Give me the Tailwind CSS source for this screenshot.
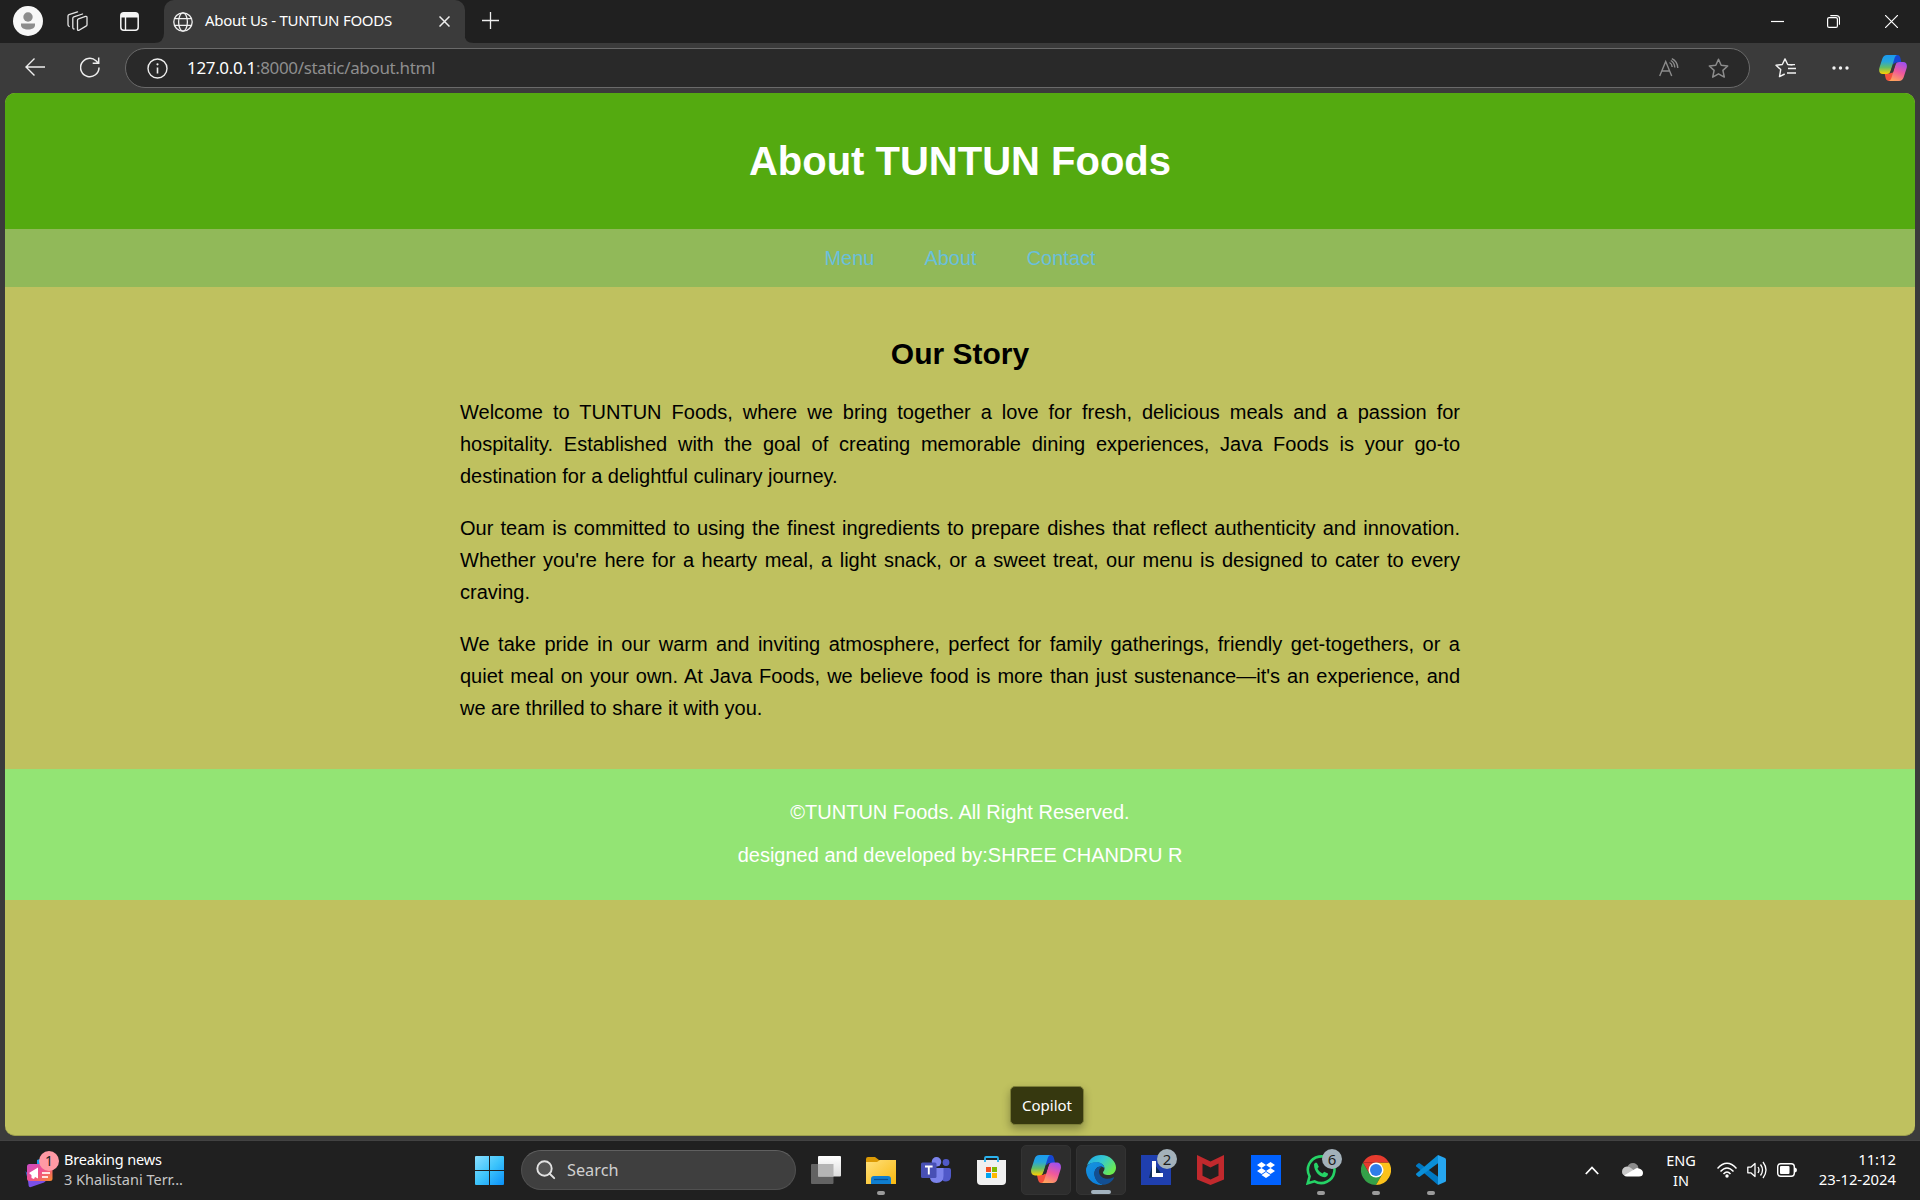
<!DOCTYPE html>
<html lang="en">
<head>
<meta charset="utf-8">
<title>About Us - TUNTUN FOODS</title>
<script src="https://cdn.jsdelivr.net/npm/@tailwindcss/browser@4"></script>
</head>
<body class="w-[1920px] h-[1200px] overflow-hidden bg-[#3b3b3b] flex flex-col font-['Noto_Sans','Open_Sans',sans-serif] text-white">

<!-- Tab strip -->
<header class="h-[43px] shrink-0 bg-[#202020] flex items-start">
  <div class="flex w-[154px] h-[43px] items-center pl-[13px] pb-px gap-[24px]">
    <svg width="30" height="30" viewBox="0 0 30 30"><circle cx="15" cy="15" r="15" fill="#f7f7f7"/><circle cx="15" cy="11" r="4.7" fill="#8c8c8c"/><path d="M8 17.5h14v1.5c0 3-3 4.5-7 4.5s-7-1.500-7-4.500z" fill="#8c8c8c"/></svg>
    <svg width="21" height="21" viewBox="0 0 21 21" fill="none" stroke="#e4e4e4" stroke-width="1.300" stroke-linejoin="round" stroke-linecap="round"><path d="M10.500 9.200q0-1 1-1.400l7-2.400q1.500-.4 1.500 1v7.300q0 1-1 1.400l-7 4.200q-1.500.6-1.500-1z"/><path d="M7 18q-1.200-.2-1.200-1.600V7.300q0-1 1-1.400L15.500 3"/><path d="M2.200 15.500Q1 15 1 13.600V5q0-1 1-1.400L10.500.8"/></svg>
    <svg class="ml-[8px]" width="19" height="19" viewBox="0 0 19 19"><rect x=".8" y=".8" width="17.400" height="17.400" rx="3" fill="none" stroke="#f4f4f4" stroke-width="1.500"/><path d="M1 5.500V3a2 2 0 012-2h13a2 2 0 012 2v2.500z" fill="#f4f4f4"/><path d="M5.500 5v13" stroke="#f4f4f4" stroke-width="1.400"/></svg>
  </div>
  <svg class="shrink-0" width="10" height="43" viewBox="0 0 10 43"><path d="M10 33v10H0q10 0 10-10z" fill="#3b3b3b"/></svg>
  <div class="-mr-px w-[301px] h-[43px] rounded-t-[10px] bg-[#3b3b3b] flex items-center pl-[9px]">
    <svg width="20" height="20" viewBox="0 0 20 20" fill="none" stroke="#f0f0f0" stroke-width="1.300"><circle cx="10" cy="10" r="9.200"/><ellipse cx="10" cy="10" rx="4.400" ry="9.200"/><path d="M1.600 6.700h16.800M1.600 13.300h16.800"/></svg>
    <span class="ml-[12px] pb-[3px] text-[15px] leading-5 w-[234px] whitespace-nowrap tracking-[-0.26px]">About Us - TUNTUN FOODS</span>
    <svg width="11" height="11" viewBox="0 0 11 11" stroke="#eee" stroke-width="1.500"><path d="M.5.5l10 10M10.500.5l-10 10"/></svg>
  </div>
  <svg class="shrink-0" width="10" height="43" viewBox="0 0 10 43"><path d="M0 33v10h10Q0 43 0 33z" fill="#3b3b3b"/></svg>
  <svg class="ml-[8px] mt-[12px]" width="17" height="17" viewBox="0 0 17 17" stroke="#eee" stroke-width="1.300"><path d="M8.500 0v17M0 8.500h17"/></svg>
  <div class="ml-auto flex h-[43px] items-center pr-[22px] gap-[44px]">
    <svg width="13" height="13" viewBox="0 0 13 13" stroke="#fff" stroke-width="1.200"><path d="M0 6.500h13"/></svg>
    <svg class="-ml-px mr-px" width="13" height="13" viewBox="0 0 13 13" fill="none" stroke="#fff" stroke-width="1.200"><rect x=".6" y="2.600" width="9.800" height="9.800" rx="1.500"/><path d="M3.300.6h6.200q3 0 3 3v6.200"/></svg>
    <svg width="13" height="13" viewBox="0 0 13 13" stroke="#fff" stroke-width="1.200"><path d="M0 0l13 13M13 0L0 13"/></svg>
  </div>
</header>

<!-- Address bar -->
<div class="h-[50px] shrink-0 flex items-center">
  <svg class="ml-[25px] mb-[2px]" width="20" height="18" viewBox="0 0 20 18" fill="none" stroke="#eee" stroke-width="1.400"><path d="M20 9H1M9.500.5L1 9l8.500 8.500"/></svg>
  <svg class="ml-[35px] mb-px" width="20" height="21" viewBox="0 0 20 21" fill="none" stroke="#eee" stroke-width="1.500"><path d="M19 10.500a9.200 9.200 0 11-3-6.800l2.500 2.500M18.700.5v5.800h-6"/></svg>
  <div class="ml-[25px] w-[1625px] h-[40px] rounded-full border border-[#6a6a6a] bg-[#292929] flex items-center pl-[21px] pr-[20px]">
    <svg width="21" height="21" viewBox="0 0 21 21"><circle cx="10.500" cy="10.500" r="9.500" fill="none" stroke="#eee" stroke-width="1.400"/><path d="M10.500 9.500v6" stroke="#eee" stroke-width="1.600"/><circle cx="10.500" cy="6.300" r="1.100" fill="#eee"/></svg>
    <span class="ml-[19px] pb-px text-[17px] leading-6 tracking-[-0.34px] text-[#8e8e8e] whitespace-nowrap"><span class="text-white">127.0.0.1</span>:8000/static/about.html</span>
    <svg class="ml-auto mb-px" width="20" height="19" viewBox="0 0 20 19" fill="none" stroke="#8c8c8c" stroke-width="1.400"><path d="M.7 18L6.700 3.500l6 14.500M2.800 13h8M10.500 4.500q2.500 1.300 2.700 4.500M11.800 2.500q3.700 2 4 7M12.800.7q5.500 2.500 6 9.300"/></svg>
    <svg class="ml-[29px]" width="21" height="21" viewBox="0 0 21 21" fill="none" stroke="#8c8c8c" stroke-width="1.500" stroke-linejoin="round"><path d="M10.500 1.300l2.700 6 6.500.7-4.800 4.400 1.400 6.700-5.800-3.300-5.800 3.300 1.400-6.700L1.300 8l6.500-.7z"/></svg>
  </div>
  <svg class="ml-[25px]" width="21" height="20" viewBox="0 0 21 20" fill="none" stroke="#f2f2f2" stroke-width="1.400" stroke-linejoin="round"><path d="M17.500 7l-4.800-.5L10 .9 7.300 6.500 1 7.300l4.700 4.300-1.200 7L9.700 16M13 10.500h8M12 15h9M15 6.600h5"/></svg>
  <svg class="ml-[36px] mb-px" width="17" height="4" viewBox="0 0 17 4" fill="#f2f2f2"><circle cx="2" cy="2" r="1.700"/><circle cx="8.500" cy="2" r="1.700"/><circle cx="15" cy="2" r="1.700"/></svg>
  <svg class="ml-[30px]" width="28" height="26" viewBox="0 0 30 28">
    <defs>
      <linearGradient id="cpA" x1="0" y1="0" x2="0" y2="1"><stop offset="0" stop-color="#1a9af0"/><stop offset=".35" stop-color="#27a5da"/><stop offset=".65" stop-color="#62bd68"/><stop offset="1" stop-color="#ffd000"/></linearGradient>
      <linearGradient id="cpB" x1=".7" y1="0" x2=".3" y2="1"><stop offset="0" stop-color="#a050ee"/><stop offset=".5" stop-color="#f0589b"/><stop offset="1" stop-color="#ffa45c"/></linearGradient>
    </defs>
    <path d="M14 0h5.500c2.500 0 3.200 2 3.800 4.500L24 8h-5c-2 0-3 1-3.600 3z" fill="#1646d2"/>
    <path d="M16 28h-5.500c-2.500 0-3.200-2-3.800-4.500L6 20h5c2 0 3-1 3.600-3z" fill="#f4513c"/>
    <path d="M8.500 0H20c-2 0-3 2-3.700 4.500L12.500 17c-.8 2.500-2 3.500-4.500 3.500H4C1 20.500-.6 18 .3 14L3.500 4C4.300 1.500 6 0 8.500 0z" fill="url(#cpA)"/>
    <path d="M21.500 28H10c2 0 3-2 3.700-4.500L17.500 11c.8-2.500 2-3.500 4.500-3.500h4c3 0 4.600 2.500 3.700 6.500l-3.200 10c-.8 2.500-2.500 4-5 4z" fill="url(#cpB)"/>
    <path d="M15.300 10h2.500l-3.200 9h-2.800z" fill="#383838"/>
  </svg>
</div>

<!-- Page -->
<div class="mx-[5px] h-[1043px] shrink-0 rounded-[10px] overflow-hidden bg-[#bfc15f] font-['Liberation_Sans',Arial,sans-serif] text-[20px] leading-[23px] text-black border-b border-[#9c9e4c]">
  <div class="h-[136px] bg-[#54aa10] pt-[45px] text-center text-white">
    <h1 class="text-[40px] leading-[46px] font-bold">About TUNTUN Foods</h1>
  </div>
  <nav class="h-[58px] bg-[#91b959] flex justify-center gap-[50px] pt-[18px] text-[#69bfdc]">
    <a>Menu</a><a>About</a><a>Contact</a>
  </nav>
  <main class="w-[1000px] mx-auto h-[482px] pt-[50px] leading-[32px]">
    <h2 class="text-[30px] leading-[34px] font-bold text-center">Our Story</h2>
    <div class="pt-[25px] flex flex-col gap-[20px] text-justify">
      <p>Welcome to TUNTUN Foods, where we bring together a love for fresh, delicious meals and a passion for hospitality. Established with the goal of creating memorable dining experiences, Java Foods is your go-to destination for a delightful culinary journey.</p>
      <p>Our team is committed to using the finest ingredients to prepare dishes that reflect authenticity and innovation. Whether you're here for a hearty meal, a light snack, or a sweet treat, our menu is designed to cater to every craving.</p>
      <p>We take pride in our warm and inviting atmosphere, perfect for family gatherings, friendly get-togethers, or a quiet meal on your own. At Java Foods, we believe food is more than just sustenance—it's an experience, and we are thrilled to share it with you.</p>
    </div>
  </main>
  <footer class="h-[131px] bg-[#93e474] pt-[32px] flex flex-col gap-[20px] text-center text-white">
    <p>©TUNTUN Foods. All Right Reserved.</p>
    <p>designed and developed by:SHREE CHANDRU R</p>
  </footer>
</div>

<!-- Taskbar -->
<div class="mt-[4px] h-[60px] shrink-0 bg-[#202020] border-t border-[#424242] flex items-center text-[15px] leading-5">
  <div class="w-[473px] flex items-center pl-[25px]">
    <div class="relative w-[29px] h-[36px] -mt-[2px]">
      <svg width="29" height="36" viewBox="0 0 29 36">
        <defs><linearGradient id="news" x1="0" y1="0" x2="1" y2="1"><stop offset="0" stop-color="#c94bc9"/><stop offset=".5" stop-color="#f0508c"/><stop offset="1" stop-color="#f78a2c"/></linearGradient></defs>
        <path d="M12 8l8-3v10h-8z" fill="#1c9be8"/><path d="M.5 19l3 11.500L8 28z" fill="#2f6fd8"/><path d="M3 28h19l-3 2.500L6 35q-2 .5-2.300-1z" fill="#7a50e8"/>
        <rect x="2" y="12" width="25.500" height="17" rx="2.500" fill="url(#news)"/>
        <path d="M4 21l9-5.500v11L10 25l-1 2-2.500-1v-2.800z" fill="#fff"/><path d="M17 21h8M17 25h6" stroke="#ffe4e0" stroke-width="1.800"/>
      </svg>
      <span class="absolute left-[14px] top-[-1px] w-[20px] h-[20px] rounded-full bg-[#ff99a4] text-[#222] text-[14px] leading-[20px] text-center">1</span>
    </div>
    <div class="ml-[10px] leading-[20px] text-[14.5px] whitespace-nowrap -mt-[4px]">
      <div class="tracking-[-0.16px]">Breaking news</div><div class="text-[#c6c6c6]">3 Khalistani Terr...</div>
    </div>
  </div>
  <svg class="ml-[2px] mb-px" width="29" height="29" viewBox="0 0 29 29"><defs><linearGradient id="win" x1="0" y1="0" x2="1" y2="1"><stop offset="0" stop-color="#8adfff"/><stop offset=".5" stop-color="#3dc4fb"/><stop offset="1" stop-color="#0a90f8"/></linearGradient></defs><path fill="url(#win)" d="M1 0h13v14H0V1q0-1 1-1zM15 0h13q1 0 1 1v13H15zM0 15h14v14H1q-1 0-1-1zM15 15h14v13q0 1-1 1H15z"/></svg>
  <div class="ml-[17px] mb-px w-[275px] h-[40px] rounded-full bg-[#3f3f3f] border border-[#505050] border-t-[#606060] flex items-center pl-[14px]">
    <svg width="20" height="20" viewBox="0 0 20 20" fill="none" stroke="#e2e2e2" stroke-width="1.900"><circle cx="8.500" cy="8.500" r="7.200" fill="#555"/><path d="M13.500 13.500l4.700 4.700" stroke-linecap="round"/></svg>
    <span class="ml-[11px] text-[16.3px] text-[#d0d0d0]">Search</span>
  </div>
  <div class="ml-[5px] mb-px flex h-[58px] items-center gap-[5px]">
    <div class="w-[50px] h-[50px] grid place-items-center">
      <svg class="mb-[1px]" width="30" height="28" viewBox="0 0 30 28"><defs><linearGradient id="tv" x1="0" y1="0" x2="0" y2="1"><stop offset="0" stop-color="#fff"/><stop offset="1" stop-color="#dcdcdc"/></linearGradient></defs><rect y="8" width="22.500" height="20" rx="1" fill="#636363"/><rect x="7" width="23" height="20.500" rx="1" fill="url(#tv)"/><path d="M7 8h15.500v12.500H7z" fill="#b5b5b5"/></svg>
    </div>
    <div class="relative w-[50px] h-[50px] grid place-items-center">
      <svg width="30" height="27" viewBox="0 0 30 27"><defs><linearGradient id="fold" x1="0" y1="0" x2="1" y2="1"><stop offset="0" stop-color="#ffe07c"/><stop offset="1" stop-color="#f9b90f"/></linearGradient></defs><path d="M0 2q0-2 2-2h7l4 3h15q2 0 2 2v6H0z" fill="#dc9a05"/><path d="M0 5h11l3-2h16v24H0z" fill="url(#fold)"/><path d="M5 27v-5q0-3 3-3h14q3 0 3 3v5z" fill="#0f7ed0"/><path d="M8 22.500h14" stroke="#084f92" stroke-width="1.200"/></svg>
      <span class="absolute bottom-0 w-2 h-1 rounded-full bg-[#9b9b9b]"></span>
    </div>
    <div class="w-[50px] h-[50px] grid place-items-center">
      <svg width="30" height="27" viewBox="0 0 30 27"><circle cx="25" cy="5.500" r="3.400" fill="#5059c9"/><circle cx="15.500" cy="4.800" r="4.800" fill="#7b83eb"/><path d="M20 11h8q2 0 2 2v6q0 5-5 5.500-5 0-5-5z" fill="#5059c9"/><path d="M9 11h13.500v8q0 7-7 7T9 19z" fill="#7b83eb"/><rect y="5.500" width="15.500" height="15.500" rx="1.500" fill="#4850b4"/><path d="M4 9.500h7.600M7.800 9.500v8" stroke="#fff" stroke-width="1.900"/></svg>
    </div>
    <div class="w-[50px] h-[50px] grid place-items-center">
      <svg width="29" height="29" viewBox="0 0 29 29"><path d="M0 4h29v21q0 4-4 4H4q-4 0-4-4z" fill="#f0f0f0"/><path d="M8 6V2q0-1 1-1h11q1 0 1 1v4" fill="none" stroke="#2bb3ee" stroke-width="1.800"/><path fill="#f25022" d="M9 11h5v5H9z"/><path fill="#7fba00" d="M15 11h5v5h-5z"/><path fill="#00a4ef" d="M9 17h5v5H9z"/><path fill="#ffb900" d="M15 17h5v5h-5z"/></svg>
    </div>
    <div class="relative w-[50px] h-[50px] rounded-[5px] bg-[#2d2d2d] border border-[#333] grid place-items-center">
      <svg class="mb-[2px]" width="30" height="28" viewBox="0 0 30 28">
        <path d="M14 0h5.500c2.500 0 3.200 2 3.800 4.500L24 8h-5c-2 0-3 1-3.600 3z" fill="#1646d2"/>
        <path d="M16 28h-5.500c-2.500 0-3.200-2-3.800-4.500L6 20h5c2 0 3-1 3.600-3z" fill="#f4513c"/>
        <path d="M8.500 0H20c-2 0-3 2-3.700 4.500L12.500 17c-.8 2.500-2 3.500-4.500 3.500H4C1 20.500-.6 18 .3 14L3.500 4C4.300 1.500 6 0 8.500 0z" fill="url(#cpA)"/>
        <path d="M21.500 28H10c2 0 3-2 3.700-4.500L17.500 11c.8-2.500 2-3.500 4.500-3.500h4c3 0 4.600 2.500 3.700 6.500l-3.200 10c-.8 2.500-2.500 4-5 4z" fill="url(#cpB)"/>
        <path d="M15.300 10h2.500l-3.200 9h-2.800z" fill="#2d2d2d"/>
      </svg>
      <div class="absolute left-[-12px] bottom-[69px] w-[74px] h-[39px] rounded-[5px] bg-[#36380f] border border-[#7d7f38] shadow-[0_4px_8px_rgba(0,0,0,0.3)] text-[15px] leading-[36px] text-center">Copilot</div>
    </div>
    <div class="relative w-[50px] h-[50px] rounded-[5px] bg-[#2d2d2d] border border-[#333] grid place-items-center">
      <svg width="30" height="30" viewBox="0 0 30 30">
        <defs><linearGradient id="eA" x1="0" y1="0" x2="1" y2=".6"><stop offset="0" stop-color="#1aa5e8"/><stop offset=".5" stop-color="#36c8d0"/><stop offset="1" stop-color="#6bea50"/></linearGradient><linearGradient id="eB" x1="0" y1="0" x2=".6" y2="1"><stop offset="0" stop-color="#1793de"/><stop offset="1" stop-color="#0b7fdc"/></linearGradient></defs>
        <path d="M1 11C2.500 4.500 8 0 15 0c9 0 15 6.500 15 12.500 0 5-3.500 7.500-7.500 7.500-4 0-5.500-1.500-5.500-2.500s1.500-1.500 1.500-4C18.500 10 15 7.500 11 7.500 6 7.500 2.500 9 1 11z" fill="url(#eA)"/>
        <path d="M0 15c0-5 5-8 10.500-8 4.500 0 8 3 8 6.500-1-1.500-2.500-2-4-2-4 0-6.500 4-6 8.500.6 5 5 9.500 9.500 9.800C8 31 0 24 0 15z" fill="url(#eB)"/>
        <path d="M14.500 11.500c-4 0-6.500 4-6 8.500.6 6 6 9.500 9.500 9.700 4-.4 8-3 9.800-6.500.4-.8-.2-1-.8-.7-6 3-14 .5-14-6 0-2 1-3.700 3-4.800z" fill="#124f93"/>
      </svg>
      <span class="absolute bottom-0 w-5 h-1 rounded-full bg-[#a3b3bf]"></span>
    </div>
    <div class="relative w-[50px] h-[50px] grid place-items-center">
      <svg width="30" height="30" viewBox="0 0 30 30"><path fill="#1f3fae" d="M0 0h30v30H0z"/><path d="M12 7l-4 16 5-1 9-1z" fill="#0a2a54"/><path d="M13 6v14h9" fill="none" stroke="#fff" stroke-width="4"/></svg>
      <span class="absolute left-[26px] top-[4px] w-5 h-5 rounded-full bg-[#a3b1ba] text-[#1c1c1c] text-[15px] leading-5 text-center">2</span>
    </div>
    <div class="w-[50px] h-[50px] grid place-items-center">
      <svg class="mr-px" width="27" height="30" viewBox="0 0 27 30"><path fill="#c1292d" fill-rule="evenodd" d="M0 0l13.500 6.500L27 0v24.500L13.500 30 0 24.500zM5.500 8.500v12.300l8 3.700 8-3.700V8.500l-8 4z"/></svg>
    </div>
    <div class="w-[50px] h-[50px] grid place-items-center">
      <svg width="30" height="30" viewBox="0 0 30 30"><path fill="#0061fe" d="M0 0h30v30H0z"/><path fill="#fff" d="M10.500 7l4.500 3-4.500 3L6 10zM19.500 7l4.500 3-4.500 3-4.500-3zM10.500 13l4.500 3-4.500 3L6 16zM19.500 13l4.500 3-4.500 3-4.500-3zM15 17l4.500 3-4.500 3-4.500-3z"/></svg>
    </div>
    <div class="relative w-[50px] h-[50px] grid place-items-center">
      <svg width="30" height="30" viewBox="0 0 30 30"><path d="M1.700 28.300l1.900-7a13.300 13.300 0 115 5z" fill="none" stroke="#25d366" stroke-width="2.600"/><path d="M8 9.500c.5-1.500 1.500-2 3-1.500l1.800 3.800-1.300 2c1.200 2.300 2.700 3.700 5 4.700l1.700-1.800 3.800 1.800c.3 2-1.500 3.700-3.700 3.700C13 21.800 8 16 8 9.500z" fill="#25d366"/></svg>
      <span class="absolute left-[26px] top-[4px] w-5 h-5 rounded-full bg-[#a3b1ba] text-[#1c1c1c] text-[15px] leading-5 text-center">6</span>
      <span class="absolute bottom-0 w-2 h-1 rounded-full bg-[#9b9b9b]"></span>
    </div>
    <div class="relative w-[50px] h-[50px] grid place-items-center">
      <svg width="30" height="30" viewBox="0 0 30 30"><path d="M2 7.500A15 15 0 0015 30l6.500-11.300L15 15 8.500 18.700z" fill="#34a048"/><path d="M28 7.500A15 15 0 0115 30l6.500-11.300L22 12l-7-4.500z" fill="#fcc21b"/><path d="M2 7.500a15 15 0 0126 0H15z" fill="#e63b2e"/><path d="M2 7.500l6.500 11.200L15 7.500z" fill="#e63b2e"/><circle cx="15" cy="15" r="7.500" fill="#fff"/><circle cx="15" cy="15" r="6" fill="#2f7de9"/></svg>
      <span class="absolute bottom-0 w-2 h-1 rounded-full bg-[#9b9b9b]"></span>
    </div>
    <div class="relative w-[50px] h-[50px] grid place-items-center">
      <svg width="30" height="30" viewBox="0 0 30 30"><path d="M2 8.500L.3 10q-.6.700 0 1.400L22 30V21.800L4 8.400q-1-.7-2 .1z" fill="#0079c4"/><path d="M2 21.500L.3 20q-.6-.7 0-1.400L22 0v8.200L4 21.600q-1 .7-2-.1z" fill="#0a8fd8"/><path d="M22 0l7 3q1 .5 1 1.500v21q0 1-1 1.500l-7 3z" fill="#26a6f0"/></svg>
      <span class="absolute bottom-0 w-2 h-1 rounded-full bg-[#9b9b9b]"></span>
    </div>
  </div>
  <div class="ml-auto mb-px flex items-center pr-[24px]">
    <svg width="14" height="9" viewBox="0 0 14 9" fill="none" stroke="#fff" stroke-width="1.800"><path d="M.8 8L7 1.500 13.200 8"/></svg>
    <svg class="ml-[23px]" width="21" height="14" viewBox="0 0 21 14"><path d="M5 5q1.500-5 6-5 4 0 5.500 4.500L11 9z" fill="#8b8b8b"/><path d="M0 9q0-5 5-5.500 2.500 0 4 1.500l5 4-8 4Q0 13 0 9z" fill="#c9c9c9"/><path d="M2 12.500L13 6q2-1.500 4-.5 4 1 4 4.500t-4 3.500H5q-2 0-3-1z" fill="#fff"/></svg>
    <div class="ml-[21px] w-[34px] text-center text-[14.5px] leading-[20px]">ENG<br>IN</div>
    <svg class="ml-[19px]" width="20" height="16" viewBox="0 0 20 16" fill="none" stroke="#fff" stroke-width="1.500"><path d="M.5 6.500q9.500-10.500 19 0M3.500 9.500q6.500-7.200 13 0M6.500 12q3.500-4 7 0"/><circle cx="10" cy="14" r="1.700" fill="#fff" stroke="none"/></svg>
    <svg class="ml-[10px]" width="20" height="18" viewBox="0 0 20 18" fill="none" stroke="#fff" stroke-width="1.300" stroke-linejoin="round"><path d="M.8 6.200h3L8 2.500v13l-4.200-3.700h-3zM11 6q2 3 0 6M13.500 3.500q4 5.500 0 11M16 1q6 8 0 16"/></svg>
    <svg class="ml-[10px]" width="20" height="14" viewBox="0 0 20 14"><rect x=".7" y=".7" width="16.600" height="12.600" rx="3" fill="none" stroke="#fff" stroke-width="1.400"/><rect x="3" y="3" width="9.500" height="8" rx="1" fill="#fff"/><path d="M18 4.500q2 .5 2 2.500t-2 2.500z" fill="#fff"/></svg>
    <div class="ml-[20px] w-[79px] text-right whitespace-nowrap text-[14.8px] leading-[20px] -mt-[2px]">11:12<br>23-12-2024</div>
  </div>
</div>
</body>
</html>
